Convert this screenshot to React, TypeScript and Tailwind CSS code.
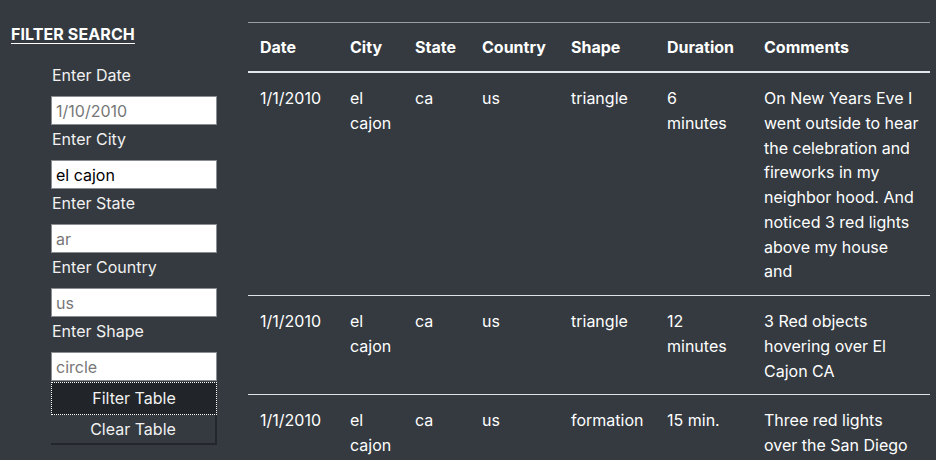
import React from "react";

const rows = [
  {
    date: "1/1/2010",
    city: "el cajon",
    state: "ca",
    country: "us",
    shape: "triangle",
    duration: "6 minutes",
    comments: [
      "On New Years Eve I",
      "went outside to hear",
      "the celebration and",
      "fireworks in my",
      "neighbor hood. And",
      "noticed 3 red lights",
      "above my house",
      "and",
    ],
  },
  {
    date: "1/1/2010",
    city: "el cajon",
    state: "ca",
    country: "us",
    shape: "triangle",
    duration: "12 minutes",
    comments: ["3 Red objects", "hovering over El", "Cajon CA"],
  },
  {
    date: "1/1/2010",
    city: "el cajon",
    state: "ca",
    country: "us",
    shape: "formation",
    duration: "15 min.",
    comments: ["Three red lights", "over the San Diego", "sky moving slowly"],
  },
];

const fields = [
  { label: "Enter Date", value: "", placeholder: "1/10/2010" },
  { label: "Enter City", value: "el cajon", placeholder: "" },
  { label: "Enter State", value: "", placeholder: "ar" },
  { label: "Enter Country", value: "", placeholder: "us" },
  { label: "Enter Shape", value: "", placeholder: "circle" },
];

export default function App() {
  return (
    <div
      className="flex h-[460px] w-[936px] overflow-hidden bg-[#343a40] text-white text-[16px] leading-[24.75px]"
      style={{ fontFamily: "Inter, 'Noto Sans', sans-serif" }}
    >
      <aside className="w-[240px] shrink-0 pl-[11px] pt-[22px]">
        <h3 className="text-[16px] font-bold underline underline-offset-[3px] leading-[24px] tracking-[0.1px]">
          FILTER SEARCH
        </h3>
        <div className="mt-[17px] pl-[40px] w-[206px]">
          {fields.map((f, i) => (
            <div key={f.label} className={i === 0 ? "" : "mt-[2px]"}>
              <label className="block h-[24px] mb-[9px] pl-px leading-[24px] text-[#f1f1f1]">{f.label}</label>
              <input
                readOnly
                value={f.value}
                placeholder={f.placeholder}
                className="block h-[29px] w-[166px] bg-white border border-[#8a8d91] px-[4px] text-black text-[16px] placeholder:text-[#777]"
              />
            </div>
          ))}
          <button className="mt-[1px] block h-[33px] w-[166px] bg-[#212529] text-[#f1f1f1] outline-dotted outline-1 -outline-offset-1 outline-white">
            Filter Table
          </button>
          <button className="block h-[30px] w-[166px] bg-[#343a40] text-[#f1f1f1] border-r-2 border-b-2 border-[#23272b]">
            Clear Table
          </button>
        </div>
      </aside>
      <main className="flex-1 pl-[8px] pr-[6px] pt-[22px]">
        <table className="w-[682px] table-fixed border-collapse">
          <colgroup>
            <col className="w-[90px]" />
            <col className="w-[65px]" />
            <col className="w-[67px]" />
            <col className="w-[89px]" />
            <col className="w-[96px]" />
            <col className="w-[97px]" />
            <col className="w-[178px]" />
          </colgroup>
          <thead>
            <tr className="border-t border-[#9a9ea2] border-b-2 border-b-[#e3e6ea]">
              {["Date", "City", "State", "Country", "Shape", "Duration", "Comments"].map((h) => (
                <th key={h} className="px-3 py-[12px] text-left font-bold align-top leading-[24px]">
                  {h}
                </th>
              ))}
            </tr>
          </thead>
          <tbody>
            {rows.map((r, i) => (
              <tr key={i} className="border-b border-[#dee2e6]">
                {[r.date, r.city, r.state, r.country, r.shape, r.duration].map((c, j) => (
                  <td key={j} className="px-3 pt-[13px] pb-[11px] align-top font-normal">
                    {c}
                  </td>
                ))}
                <td className="pl-3 pr-[6px] pt-[13px] pb-[11px] align-top font-normal">
                  {r.comments.map((line, k) => (
                    <span key={k} className="block whitespace-nowrap">
                      {line}
                    </span>
                  ))}
                </td>
              </tr>
            ))}
          </tbody>
        </table>
      </main>
    </div>
  );
}
